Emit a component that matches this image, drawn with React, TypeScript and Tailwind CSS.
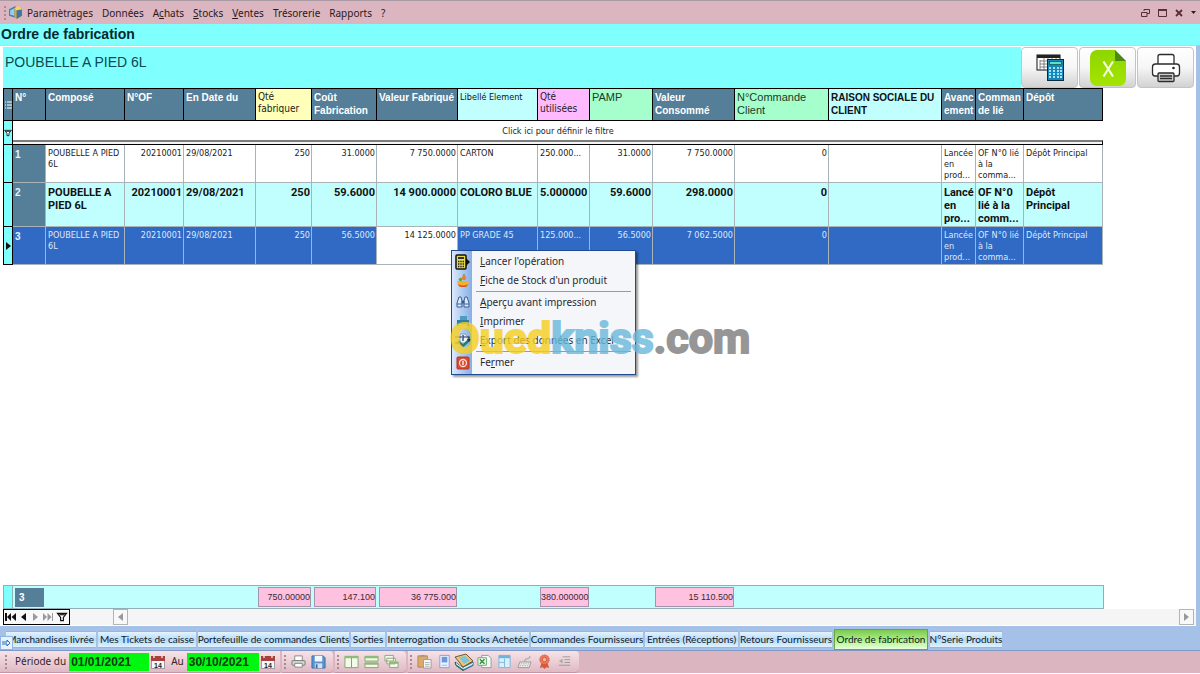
import React from "react";

const TAHOMA = "font-['DejaVu_Sans_Condensed','DejaVu_Sans',sans-serif]";
const SEGOE = "font-['Noto_Sans','Open_Sans',sans-serif]";
const ARIAL = "font-['Liberation_Sans',Arial,sans-serif]";

/* ---------- icons ---------- */

const AppLogo = () => (
  <svg viewBox="0 0 14 14" className="size-[15px]" aria-hidden="true">
    <path d="M1 4 7 1v11L1 10z" fill="#2f7fc4" />
    <path d="M2 5 6 3v7L2 9z" fill="#8fd0f2" />
    <path d="M6 3l4-2 3 3v6l-5 3-2-2z" fill="#e9a227" />
    <path d="M8 5l5-1v6l-5 3z" fill="#3a76ac" />
    <path d="M6 3l4-2 3 3-5 1z" fill="#f7d36b" />
  </svg>
);

const TableCalcIcon = () => (
  <svg viewBox="0 0 28 27" className="h-[27px] w-[28px]" aria-hidden="true">
    <rect x="1" y="1" width="23" height="15" fill="#fff" stroke="#111" />
    <rect x="1" y="1" width="23" height="3" fill="#222" />
    <path d="M4 6v10M4 7h20M4 10h20M4 13h20M8 4v12M12 4v12M16 4v12M20 4v12" stroke="#555" strokeWidth="0.7" />
    <rect x="11.5" y="5.5" width="16" height="21" fill="#1687b8" stroke="#0c2c3c" />
    <rect x="13.5" y="7.5" width="12" height="3" fill="#5fe0c4" stroke="#0c3c3c" strokeWidth="0.6" />
    <g fill="#9fe4ff">
      {[13, 17, 21, 24].map((x) =>
        [13, 16, 19, 22].map((y) => <rect key={`${x}-${y}`} x={x} y={y} width="2" height="2" />)
      )}
    </g>
  </svg>
);

const ExcelBadge = () => (
  <svg viewBox="0 0 38 38" className="size-[38px]" aria-hidden="true">
    <defs>
      <linearGradient id="lime" x1="0" y1="0" x2="0" y2="1">
        <stop offset="0" stopColor="#8ed600" />
        <stop offset="1" stopColor="#a4e400" />
      </linearGradient>
    </defs>
    <path d="M8 1h18l11 11v18a7 7 0 0 1-7 7H8a7 7 0 0 1-7-7V8a7 7 0 0 1 7-7z" fill="url(#lime)" />
    <path d="M26 1v11h11z" fill="#4c8a12" />
    <path d="M14.500 12.500l9.500 15M24 12.500l-9.500 15" stroke="#f4ffe0" strokeWidth="2.2" fill="none" />
  </svg>
);

const PrinterLarge = () => (
  <svg viewBox="0 0 30 30" className="size-[30px]" fill="none" stroke="#2b2b2b" strokeWidth="1.3" aria-hidden="true">
    <path d="M7 11V3.500Q7 1.500 9 1.500H21Q23 1.500 23 3.500V11" fill="#fff" />
    <path d="M7 23H4Q1.500 23 1.500 20V14Q1.500 11 4.500 11H25.500Q28.500 11 28.500 14V20Q28.500 23 26 23H23" fill="#fff" />
    <circle cx="22.5" cy="15" r="0.7" fill="#222" />
    <rect x="7" y="20" width="16" height="8.5" rx="1" fill="#ccc" />
    <path d="M9 23h12M9 25.500h12" />
  </svg>
);

const FunnelIcon = ({ className }: { className: string }) => (
  <svg viewBox="0 0 12 11" className={className} fill="none" stroke="#111" strokeWidth="1.3" aria-hidden="true">
    <path d="M1 1.500h10L7.500 6v3.500h-3V6z" fill="#fff" />
    <path d="M3 3h6" />
  </svg>
);

const CalcGo = () => (
  <svg viewBox="0 0 16 16" className="size-4" aria-hidden="true">
    <rect x="1" y="1" width="10" height="14" rx="1" fill="#e8d94a" stroke="#111" strokeWidth="1.5" />
    <rect x="3" y="3" width="6" height="2" fill="#333" />
    <path d="M3 7.500h6M3 10h6M3 12.500h6" stroke="#222" strokeWidth="1.5" strokeDasharray="1.4 .9" />
    <path d="M11 4l4 4-4 4z" fill="#111" />
  </svg>
);

const BasketIcon = () => (
  <svg viewBox="0 0 14 14" className="size-[14px]" aria-hidden="true">
    <path d="M1 7h12l-1 4q-1 2-3 2H5q-2 0-3-2z" fill="#f0b030" />
    <path d="M2 10q5 3 10 0l-1 2q-1 1-2 1H5q-1 0-2-1z" fill="#d8542a" />
    <circle cx="8" cy="4" r="2.2" fill="#e9822c" />
    <circle cx="4.5" cy="5.5" r="1.8" fill="#6aa832" />
    <path d="M8 2V0" stroke="#4b8322" />
  </svg>
);

const BinocularsIcon = () => (
  <svg viewBox="0 0 14 13" className="h-[13px] w-[14px]" fill="#dbe9fb" stroke="#3b5c94" aria-hidden="true">
    <path d="M3 1h2l1 4v6H1V7z" />
    <path d="M9 1h2l2 6v4H8V5z" />
    <path d="M6 5h2v2H6z" fill="#3b5c94" />
    <path d="M1 8h5M8 8h5" />
  </svg>
);

const PrinterBlue = () => (
  <svg viewBox="0 0 14 14" className="size-[14px]" aria-hidden="true">
    <path d="M4 1h7v5H4z" fill="#4e9cc0" />
    <path d="M1 5h12v6H1z" fill="#2d7fa6" />
    <path d="M3 9h8v4H3z" fill="#b7dceb" />
  </svg>
);

const ExportIcon = () => (
  <svg viewBox="0 0 18 16" className="h-4 w-[18px]" fill="none" aria-hidden="true">
    <path d="M6 1h5l3 3v6H6z" fill="#eef5fd" stroke="#7f9cc0" />
    <path d="M1 4h7M1 10h6M9 2v6M9 4h6v3" stroke="#1b2e5c" strokeWidth="1.2" />
    <path d="M4 8l5 5 6-6" stroke="#23806c" strokeWidth="2.6" />
    <path d="M13 6l2 3 2-3z" fill="#1b2e5c" />
  </svg>
);

const CloseRed = () => (
  <svg viewBox="0 0 14 14" className="size-[14px]" aria-hidden="true">
    <rect x="1" y="1" width="12" height="12" rx="1" fill="#d9492f" stroke="#b5351f" />
    <circle cx="7" cy="7" r="3.5" fill="none" stroke="#ffe0d6" strokeWidth="1.3" />
    <path d="M7 5v4" stroke="#fff" strokeWidth="1.3" />
  </svg>
);

const CalendarIcon = () => (
  <svg viewBox="0 0 14 14" className="size-[14px]" aria-hidden="true">
    <rect x="0.5" y="1.5" width="13" height="12" fill="#f8f8f8" stroke="#a89aa0" />
    <path d="M0 1h14v5H0z" fill="#a8403c" />
    <path d="M3 0v3M11 0v3" stroke="#eee" strokeWidth="1.3" />
    <text x="7" y="12.5" fontSize="7" fontWeight="700" textAnchor="middle" fill="#222" fontFamily="Liberation Sans, sans-serif">14</text>
  </svg>
);

const ToolSvg = ({ children }: { children: React.ReactNode }) => (
  <svg viewBox="0 0 16 16" className="size-[15px] shrink-0" fill="none" aria-hidden="true">
    {children}
  </svg>
);

const toolIcons: Record<string, React.ReactNode> = {
  Imprimer: (
    <ToolSvg>
      <path d="M4 7V2h8v5" fill="#fff" stroke="#888" />
      <rect x="1" y="7" width="14" height="5" rx="1" fill="#d4d4d4" stroke="#777" />
      <path d="M4 10h8v4H4z" fill="#fff" stroke="#888" />
    </ToolSvg>
  ),
  Enregistrer: (
    <ToolSvg>
      <path d="M1 2h12l2 2v11H1z" fill="#5b93cf" stroke="#3d6ea8" />
      <path d="M4 2h8v6H4z" fill="#f2f7fc" />
      <path d="M4 10h8v5H4z" fill="#d3e1f0" />
      <path d="M5 11h2v4H5z" fill="#3d6ea8" />
    </ToolSvg>
  ),
  "Mosaïque verticale": (
    <ToolSvg>
      <path d="M1 2.500h7v12H1zM8 2.500h7v12H8z" fill="#f2faea" stroke="#7fa868" />
      <path d="M1 3.500h14" stroke="#8fbb76" strokeWidth="2" />
    </ToolSvg>
  ),
  "Mosaïque horizontale": (
    <ToolSvg>
      <path d="M1 2.500h14v5H1zM1 9.500h14v5H1z" fill="#f2faea" stroke="#7fa868" />
      <path d="M1 3.500h14M1 10.500h14" stroke="#8fbb76" strokeWidth="2" />
    </ToolSvg>
  ),
  Cascade: (
    <ToolSvg>
      <path d="M1 1.500h9v6H1zM3 4.500h9v6H3zM6 8.500h9v6H6z" fill="#f2faea" stroke="#8da37f" />
      <path d="M6 9.500h9" stroke="#8fbb76" strokeWidth="2" />
    </ToolSvg>
  ),
  Coller: (
    <ToolSvg>
      <path d="M1 2h10v12H1z" fill="#dba96a" stroke="#b58650" />
      <path d="M4 1h4v2H4z" fill="#999" />
      <path d="M7 6h8v9H7z" fill="#fff" stroke="#999" />
      <path d="M8.500 9h5M8.500 11h5M8.500 13h5" stroke="#aaa" />
    </ToolSvg>
  ),
  Fiche: (
    <ToolSvg>
      <path d="M3 1.500h10v13H3z" fill="#eaf3ff" stroke="#7fa3d8" />
      <path d="M5 3h6v6H5z" fill="#6c98dc" />
      <path d="M5 12h6" stroke="#9db8e0" />
    </ToolSvg>
  ),
  Articles: (
    <svg viewBox="0 0 20 18" className="h-[18px] w-5 shrink-0" fill="none" aria-hidden="true">
      <path d="M1 9l8 6v2.500l-7-5z" fill="#3d9a8c" stroke="#2a5a55" />
      <path d="M9 14l10-5v3.500L9 17.500z" fill="#6fb4d0" stroke="#2d6378" />
      <path d="M1 4l11-3 7 7-10 6z" fill="#e9c67a" stroke="#6d5a33" />
      <path d="M5 4.500l6-1.500 5 4.500-6 3.500z" fill="#7dc4dd" />
      <path d="M9 15.500l10-5M2 10.500l7 5" stroke="#fff" />
    </svg>
  ),
  Excel: (
    <ToolSvg>
      <path d="M5 1.500h7l3 3v10H5z" fill="#f4fbf4" stroke="#8a9cb0" />
      <path d="M1 4h9v8H1z" fill="#f4fbf4" stroke="#5fa868" />
      <path d="M3 5.500l5 5M8 5.500l-5 5" stroke="#3b8a48" strokeWidth="1.6" />
    </ToolSvg>
  ),
  Tableau: (
    <ToolSvg>
      <path d="M2 1.500h12v13H2z" fill="#d9f0fc" stroke="#7db6d8" />
      <path d="M2 3h12" stroke="#6fb4e0" strokeWidth="3" />
      <path d="M8 5v9M2 9h6" stroke="#7db6d8" />
    </ToolSvg>
  ),
  Clavier: (
    <ToolSvg>
      <path d="M3 8.500h12l-2 6H1z" fill="#eee" stroke="#999" />
      <path d="M4 10.500h9M3 12.500h9" stroke="#aaa" strokeDasharray="1.5 1" />
      <path d="M8 8q0-3 3-3t3-3" stroke="#999" />
    </ToolSvg>
  ),
  Licence: (
    <ToolSvg>
      <path d="M5 9l-2 6 3-1 2 2 2-2 3 1-2-6z" fill="#d8593f" />
      <circle cx="8" cy="6" r="5" fill="#ea7a58" stroke="#cf5a3c" strokeDasharray="1.5 .7" />
      <circle cx="8" cy="6" r="2.4" fill="#f6b49c" stroke="#d8593f" />
    </ToolSvg>
  ),
  Retrait: (
    <ToolSvg>
      <path d="M6 3h8M8 6h6M8 9h6M2 12h12" stroke="#999" />
      <path d="M6 5v5L2 7.500z" fill="#aaa" />
    </ToolSvg>
  ),
};

/* ---------- data ---------- */

const menus: { before: string; key: string; after: string }[] = [
  { before: "Paramètrages", key: "", after: "" },
  { before: "Données", key: "", after: "" },
  { before: "A", key: "c", after: "hats" },
  { before: "", key: "S", after: "tocks" },
  { before: "", key: "V", after: "entes" },
  { before: "Trésorerie", key: "", after: "" },
  { before: "Rapports", key: "", after: "" },
  { before: "?", key: "", after: "" },
];

const SLATE = `bg-[#557e98] text-white font-bold text-[10px] leading-[13px] ${ARIAL}`;

const columns = [
  { label: "N°", col: "w-[33px]", head: SLATE },
  { label: "Composé", col: "w-[79px]", head: SLATE },
  { label: "N°OF", col: "w-[59px]", head: SLATE },
  { label: "En Date du", col: "w-[72px]", head: SLATE },
  { label: "Qté fabriquer", col: "w-[56px]", head: `bg-[#ffffb9] text-[#222] font-normal text-[10px] leading-[12px] ${TAHOMA}` },
  { label: "Coût Fabrication", col: "w-[65px]", head: SLATE },
  { label: "Valeur Fabriqué", col: "w-[81px]", head: SLATE },
  { label: "Libellé Element", col: "w-[80px]", head: `bg-[#c1ffff] text-[#111] font-normal text-[9px] leading-[12px] ${TAHOMA}` },
  { label: "Qté utilisées", col: "w-[52px]", head: `bg-[#ffb9ff] text-[#222] font-normal text-[10px] leading-[12px] ${TAHOMA}` },
  { label: "PAMP", col: "w-[63px]", head: `bg-[#a4ffcc] text-[#1c3a2a] font-normal text-[11px] leading-[13px] ${ARIAL}` },
  { label: "Valeur Consommé", col: "w-[82px]", head: SLATE },
  { label: "N°Commande Client", col: "w-[94px]", head: `bg-[#a4ffcc] text-[#1c3a2a] font-normal text-[11px] leading-[13px] ${ARIAL}` },
  { label: "RAISON SOCIALE DU CLIENT", col: "w-[113px]", head: `bg-[#c1ffff] text-[#111] font-bold text-[10px] leading-[13px] ${ARIAL}` },
  { label: "Avanc\nement", col: "w-[34px]", head: SLATE },
  { label: "Comman\nde lié", col: "w-[48px]", head: SLATE },
  { label: "Dépôt", col: "w-[79px]", head: SLATE },
];

const rightAligned = [2, 4, 5, 6, 9, 10, 11];

const rows = [
  ["1", "POUBELLE A PIED\n6L", "20210001", "29/08/2021", "250", "31.0000", "7 750.0000", "CARTON", "250.000...", "31.0000", "7 750.0000", "0", "", "Lancée\nen\nprod...", "OF N°0 lié\nà la\ncomma...", "Dépôt Principal"],
  ["2", "POUBELLE A\nPIED 6L", "20210001", "29/08/2021", "250", "59.6000", "14 900.0000", "COLORO BLUE", "5.000000", "59.6000", "298.0000", "0", "", "Lancé\nen\npro...", "OF N°0\nlié à la\ncomm...", "Dépôt\nPrincipal"],
  ["3", "POUBELLE A PIED\n6L", "20210001", "29/08/2021", "250", "56.5000", "14 125.0000", "PP GRADE 45", "125.000...", "56.5000", "7 062.5000", "0", "", "Lancée\nen\nprod...", "OF N°0 lié\nà la\ncomma...", "Dépôt Principal"],
];

const rowStyles = [
  `h-[38px] bg-white text-[#222] text-[9px] leading-[11px] ${TAHOMA}`,
  `h-[44px] bg-[#c1ffff] text-[#111] font-bold text-[11px] leading-[13px] font-['Roboto','Liberation_Sans',sans-serif]`,
  `h-[38px] bg-[#316ac5] text-[#dfe9f8] text-[9px] leading-[11px] ${TAHOMA}`,
];

const totals: Record<number, string> = {
  4: "750.00000",
  5: "147.100",
  6: "36 775.000",
  8: "380.000000",
  10: "15 110.500",
};

const tabs = [
  { label: "Marchandises livrée", width: "w-[90px] justify-end overflow-hidden pr-[2px]" },
  { label: "Mes Tickets de caisse", width: "w-[98px] justify-center" },
  { label: "Portefeuille de commandes Clients", width: "w-[151px] justify-center" },
  { label: "Sorties", width: "w-[34px] justify-center" },
  { label: "Interrogation du Stocks Achetée", width: "w-[142px] justify-center" },
  { label: "Commandes Fournisseurs", width: "w-[112px] justify-center" },
  { label: "Entrées (Réceptions)", width: "w-[93px] justify-center" },
  { label: "Retours Fournisseurs", width: "w-[92px] justify-center" },
  { label: "Ordre de fabrication", width: "w-[94px] justify-center" },
  { label: "N°Serie Produits", width: "w-[72px] justify-center" },
];

const contextItems = [
  { before: "", key: "L", after: "ancer l'opération", icon: <CalcGo />, divider: false },
  { before: "", key: "F", after: "iche de Stock d'un produit", icon: <BasketIcon />, divider: false },
  { before: "", key: "A", after: "perçu avant impression", icon: <BinocularsIcon />, divider: true },
  { before: "", key: "I", after: "mprimer", icon: <PrinterBlue />, divider: false },
  { before: "", key: "E", after: "xport des données en Excel", icon: <ExportIcon />, divider: false },
  { before: "Fe", key: "r", after: "mer", icon: <CloseRed />, divider: true },
];

/* ---------- pieces ---------- */

const Grip = () => (
  <span className="h-[14px] w-0 shrink-0 border-l-2 border-dotted border-[#a88a94]" aria-hidden="true" />
);

const ColGroup = () => (
  <colgroup>
    <col className="w-[9px]" />
    {columns.map((c) => (
      <col key={c.label} className={c.col} />
    ))}
  </colgroup>
);

function MenuBar() {
  return (
    <header className={`flex h-6 items-center border-t border-[#a99aa4] bg-[#dbb5bf] pl-1 pr-1 text-[10px] text-[#2a1a20] ${SEGOE}`}>
      <Grip />
      <span className="ml-[2px]"><AppLogo /></span>
      <nav className="flex flex-1 items-center gap-px">
        {menus.map((m) => (
          <button key={m.before + m.key} type="button" className="px-1 leading-4">
            {m.before}
            {m.key && <span className="underline">{m.key}</span>}
            {m.after}
          </button>
        ))}
      </nav>
      <div className="flex items-center gap-2">
        <button type="button" aria-label="Restaurer">
          <svg viewBox="0 0 9 8" className="h-2 w-[9px]" fill="none" stroke="#5a2c3c">
            <path d="M3 2V.5h5.500v4H6" />
            <path d="M.5 3.500H6v4H.5z" />
          </svg>
        </button>
        <button type="button" aria-label="Agrandir">
          <svg viewBox="0 0 9 8" className="h-2 w-[9px]" fill="none" stroke="#5a2c3c">
            <path d="M.5 1.500h8v6h-8z" />
            <path d="M0 1h9" strokeWidth="2" />
          </svg>
        </button>
        <button type="button" aria-label="Fermer la fenêtre">
          <svg viewBox="0 0 8 8" className="size-2" stroke="#5a2c3c" strokeWidth="1.8">
            <path d="M1 1l6 6M7 1L1 7" />
          </svg>
        </button>
        <button type="button" aria-label="Options">
          <svg viewBox="0 0 5 3" className="h-[3px] w-[5px]"><path d="M0 0h5L2.500 3z" fill="#222" /></svg>
        </button>
      </div>
    </header>
  );
}

function Grid() {
  return (
    <table className="w-[1100px] table-fixed border-separate border-spacing-0 border-l border-black">
      <ColGroup />
      <thead>
        <tr className="h-[33px]">
          <th className="border-b border-r border-t border-black bg-[#557e98] p-0" aria-label="Sélecteur">
            <svg viewBox="0 0 7 8" className="mx-auto h-2 w-[7px]" stroke="#fff"><path d="M0 1h1M2 1h5M0 4h1M2 4h5M0 7h1M2 7h5" /></svg>
          </th>
          {columns.map((c) => (
            <th key={c.label} scope="col" className={`overflow-hidden whitespace-pre-line border-b border-r border-t border-black py-[2px] pl-[2px] pr-0 text-left align-top ${c.head}`}>
              {c.label}
            </th>
          ))}
        </tr>
      </thead>
      <tbody>
        <tr className="h-6">
          <td className="border-b border-r border-black bg-[#80ffff] p-0">
            <FunnelIcon className="mx-auto h-2 w-2" />
          </td>
          <td colSpan={16} className={`p-0 align-top text-[9px] text-[#222] ${TAHOMA}`}>
            <button type="button" className="block h-[19px] w-full text-center leading-[20px]">
              Click ici pour définir le filtre
            </button>
            <div className="h-[5px] border-b border-r border-t-2 border-b-black border-r-black border-t-[#7d7d7d] bg-[#f4f4f4]" />
          </td>
        </tr>
        {rows.map((r, ri) => (
          <tr key={r[0]} className={rowStyles[ri]}>
            <td className="border-b border-r border-black bg-[#80ffff] p-0">
              {ri === 2 && (
                <svg viewBox="0 0 5 8" className="mx-auto h-2 w-[5px]"><path d="M0 0l5 4-5 4z" fill="#111" /></svg>
              )}
            </td>
            {r.map((v, ci) => {
              const head = ci === 0;
              const focused = ri === 2 && ci === 6;
              return (
                <td
                  key={ci}
                  className={[
                    "overflow-hidden whitespace-pre border-b border-r border-[#a9b4b8] pb-0 pl-[2px] pr-px pt-[3px] align-top",
                    rightAligned.includes(ci) ? "text-right" : "text-left",
                    head ? `font-bold text-[10px] leading-[13px] text-[#e6f2f8] ${ARIAL}` : "",
                    head && ri < 2 ? "bg-[#557e98]" : "",
                    focused ? "bg-white text-[#222]" : "",
                  ].join(" ")}
                >
                  {v}
                </td>
              );
            })}
          </tr>
        ))}
      </tbody>
    </table>
  );
}

function Totals() {
  return (
    <table className="w-[1101px] table-fixed border-separate border-spacing-0 border border-[#8fb0b8]">
      <ColGroup />
      <tbody>
        <tr className="h-[22px] bg-[#c1ffff]">
          <td className="border-r border-[#8fb0b8] bg-[#80ffff] p-0" />
          {columns.map((c, i) => (
            <td key={c.label} className="p-px pl-[2px]">
              {i === 0 && (
                <div className="h-[19px] w-[29px] bg-[#557e98] pl-1 text-[10px] font-bold leading-[19px] text-white">3</div>
              )}
              {totals[i] && (
                <div className="h-5 whitespace-nowrap border border-[#a394ac] bg-[#ffc1e0] text-right text-[9px] leading-[18px] text-[#3a2a34]">
                  {totals[i]}
                </div>
              )}
            </td>
          ))}
        </tr>
      </tbody>
    </table>
  );
}

function Navigator() {
  return (
    <div className="flex h-4 items-stretch justify-between bg-[#f5f5f5] pr-[2px]">
      <div className="flex items-stretch">
        <div className="flex items-center gap-[5px] border border-black bg-[#f8f8f8] px-px">
          <button type="button" aria-label="Premier">
            <svg viewBox="0 0 11 8" className="h-2 w-[11px]"><path d="M0 0h2v8H0zM6 0v8L2 4zM11 0v8L6.500 4z" fill="#111" /></svg>
          </button>
          <button type="button" aria-label="Précédent">
            <svg viewBox="0 0 5 8" className="h-2 w-[5px]"><path d="M5 0v8L0 4z" fill="#111" /></svg>
          </button>
          <button type="button" aria-label="Suivant" className="ml-[2px]">
            <svg viewBox="0 0 5 8" className="h-2 w-[5px]"><path d="M0 0v8l5-4z" fill="#999" /></svg>
          </button>
          <button type="button" aria-label="Dernier">
            <svg viewBox="0 0 10 8" className="h-2 w-[10px]"><path d="M0 0v8l4-4zM4.500 0v8l4-4zM9 0h1v8H9z" fill="#999" /></svg>
          </button>
          <button type="button" aria-label="Filtrer" className="-ml-[2px]">
            <FunnelIcon className="h-[10px] w-3" />
          </button>
        </div>
        <button type="button" aria-label="Défiler à gauche" className="ml-[43px] grid w-[15px] place-items-center border border-[#b4b4b4] bg-[#f8f8f8]">
          <svg viewBox="0 0 5 8" className="h-2 w-[5px]"><path d="M5 0v8L0 4z" fill="#999" /></svg>
        </button>
      </div>
      <button type="button" aria-label="Défiler à droite" className="grid w-[15px] place-items-center border border-[#b4b4b4] bg-[#f8f8f8]">
        <svg viewBox="0 0 5 8" className="h-2 w-[5px]"><path d="M0 0v8l5-4z" fill="#999" /></svg>
      </button>
    </div>
  );
}

function ContextMenu() {
  return (
    <div role="menu" className={`absolute left-[451px] top-[250px] w-[185px] border border-[#1f4a94] bg-[linear-gradient(90deg,#dbe9fc_0px,#86aee6_20px,#f5f6fa_20px)] pb-[2px] pt-px text-[10px] text-[#2a2a30] shadow-[2px_2px_2px_rgba(0,0,0,0.4)] ${SEGOE}`}>
      {contextItems.map((it) => (
        <React.Fragment key={it.key + it.after}>
          {it.divider && <div role="separator" className="my-px ml-6 mr-1 h-px bg-[#7a9fd4]" />}
          <button type="button" role="menuitem" className="flex h-[19px] w-full items-center text-left">
            <span className="mr-[7px] flex w-[21px] justify-center">{it.icon}</span>
            <span className="whitespace-nowrap">
              {it.before}
              <span className="underline">{it.key}</span>
              {it.after}
            </span>
          </button>
        </React.Fragment>
      ))}
    </div>
  );
}

function Watermark() {
  return (
    <div className="pointer-events-none absolute left-[450px] top-[310px] whitespace-nowrap font-['Roboto','Open_Sans',sans-serif] text-[43px] font-bold leading-[56px] opacity-80 [-webkit-text-stroke:2px]" aria-hidden="true">
      <span className="text-[#f5cf1f]">Oued</span>
      <span className="text-[#68b8dc]">kniss</span>
      <span className="text-[#7d7d7d]">.com</span>
    </div>
  );
}

function ToolGroup({ names }: { names: string[] }) {
  return (
    <div className="flex items-center gap-[5px] rounded-r-sm border-b border-[#c697a4] bg-gradient-to-b from-[#f6e3e8] to-[#dfbac4] pl-[2px] pr-[7px]">
      <Grip />
      {names.map((n) => (
        <button key={n} type="button" aria-label={n} className="flex w-[15px] justify-center">
          {toolIcons[n]}
        </button>
      ))}
    </div>
  );
}

function DateField({ id, label, value, width }: { id: string; label: string; value: string; width: string }) {
  return (
    <>
      <label htmlFor={id} className="pl-1 pr-[3px]">{label}</label>
      <input id={id} defaultValue={value} className={`h-[18px] bg-[#00f810] px-[2px] text-[12px] font-bold text-[#103a10] outline-none ${width} ${ARIAL}`} />
      <button type="button" aria-label={`Calendrier ${label}`} className="mx-[2px]"><CalendarIcon /></button>
    </>
  );
}

export default function App() {
  return (
    <div className={`relative flex min-h-screen flex-col bg-white ${ARIAL}`}>
      <MenuBar />
      <h1 className="h-[21px] bg-[#80ffff] pl-px text-[14px] font-bold leading-[20px] text-[#062a30]">Ordre de fabrication</h1>

      <main className="flex flex-1 flex-col border-r-4 border-t border-[#a5c1e8] border-t-[#c8d4d8] bg-white pb-px pl-[3px]">
        <div className="mt-px flex h-[41px] justify-between bg-[#80ffff]">
          <h2 className="pl-[2px] text-[14px] leading-[30px] text-[#0a4a50]">POUBELLE A PIED 6L</h2>
          <div className="flex gap-px bg-white pr-[2px]">
            {[
              { name: "Calcul", icon: <TableCalcIcon /> },
              { name: "Exporter vers Excel", icon: <ExcelBadge /> },
              { name: "Imprimer la liste", icon: <PrinterLarge /> },
            ].map((b) => (
              <button key={b.name} type="button" aria-label={b.name} className="grid w-[57px] place-items-center rounded-sm border border-[#c4c4c4] bg-gradient-to-b from-white via-[#f6f6f6] to-[#d2d2d2]">
                {b.icon}
              </button>
            ))}
          </div>
        </div>
        <Grid />
        <div className="flex-1" />
        <Totals />
        <Navigator />
      </main>

      <div className="flex h-[25px] items-start border-b border-[#8098c8] bg-[#a5c1e8] pt-[3px] font-['Lato','Liberation_Sans',sans-serif] text-[10px] text-[#101828]">
        <button type="button" aria-label="Onglets précédents" className="z-10 -mr-[7px] mt-[7px] grid h-[14px] w-[13px] place-items-center border border-[#8fb4e0] bg-[#e6f2ff]">
          <svg viewBox="0 0 9 8" className="h-2 w-[9px]" fill="none" stroke="#2a6cb8"><path d="M0 3h5V1l3 3-3 3V5H0" /></svg>
        </button>
        <div role="tablist" className="flex items-start gap-[2px]">
          {tabs.map((t) => {
            const active = t.label === "Ordre de fabrication";
            return (
              <button
                key={t.label}
                type="button"
                role="tab"
                aria-selected={active}
                className={`flex items-center whitespace-nowrap ${t.width} ${
                  active
                    ? "h-[21px] border border-[#6aa83c] bg-gradient-to-b from-[#7cc850] via-[#a8f080] to-[#e8ffd8]"
                    : "mt-[2px] h-[17px] border-y border-[#8fb8e4] bg-gradient-to-b from-[#e6f3ff] via-[#b4dcfb] to-[#dff1ff]"
                }`}
              >
                {t.label}
              </button>
            );
          })}
        </div>
      </div>

      <footer className={`flex h-[22px] gap-[2px] bg-[#dbb5bf] text-[10px] text-[#3a2028] ${SEGOE}`}>
        <div className="flex items-center border-b border-[#c697a4] bg-gradient-to-b from-[#f6e3e8] to-[#dfbac4] pl-[5px] pr-[3px]">
          <Grip />
          <span className="w-1" />
          <DateField id="date-debut" label="Période du" value="01/01/2021" width="w-[80px]" />
          <DateField id="date-fin" label="Au" value="30/10/2021" width="w-[72px]" />
        </div>
        <ToolGroup names={["Imprimer", "Enregistrer"]} />
        <ToolGroup names={["Mosaïque verticale", "Mosaïque horizontale", "Cascade"]} />
        <ToolGroup names={["Coller", "Fiche", "Articles", "Excel", "Tableau", "Clavier", "Licence", "Retrait"]} />
      </footer>
      <div className="h-px" />

      <ContextMenu />
      <Watermark />
    </div>
  );
}
